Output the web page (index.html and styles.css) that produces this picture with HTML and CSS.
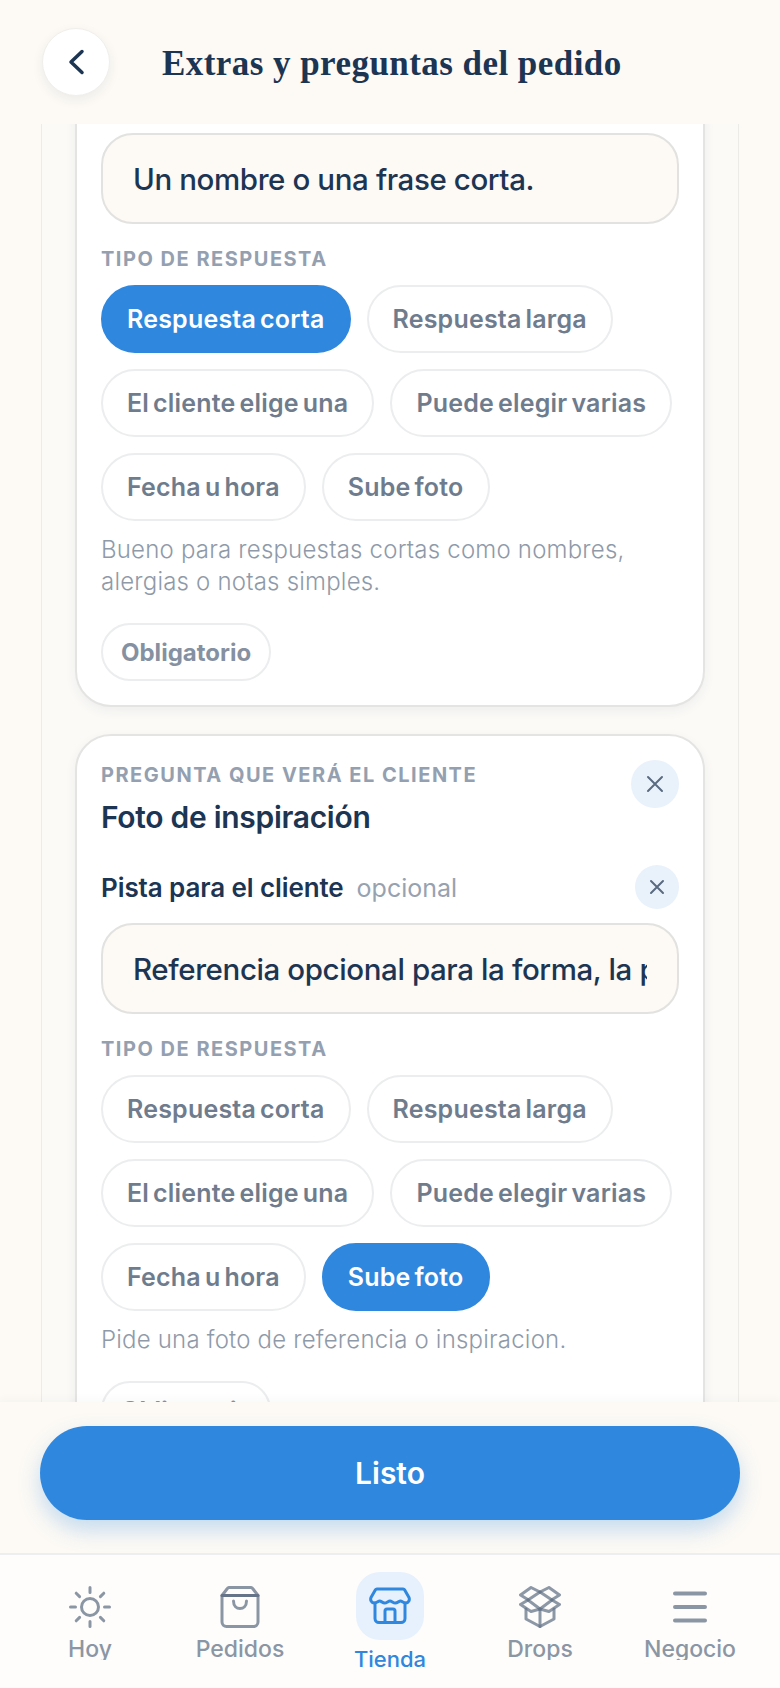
FILE: index.html
```html
<!DOCTYPE html>
<html lang="es">
<head>
  <title>Extras y preguntas del pedido</title>
  <meta name="viewport" content="width=device-width, initial-scale=1" />
  <link rel="stylesheet" href="styles.css">
</head>
<body>
  <header class="topbar">
    <button class="back" type="button" aria-label="Volver">
      <svg width="18" height="26" viewBox="0 0 18 26"><path d="M15 2.5 4 13l11 10.5" /></svg>
    </button>
    <h1>Extras y preguntas del pedido</h1>
  </header>

  <main class="scroller">
    <section class="group">
      <article class="card card-first">
        <input class="field" value="Un nombre o una frase corta.">
        <div class="eyebrow type-label">TIPO DE RESPUESTA</div>
        <div class="chips">
          <span class="chip selected">Respuesta corta</span>
          <span class="chip">Respuesta larga</span>
          <span class="chip">El cliente elige una</span>
          <span class="chip">Puede elegir varias</span>
          <span class="chip">Fecha u hora</span>
          <span class="chip">Sube foto</span>
        </div>
        <p class="help">Bueno para respuestas cortas como nombres, alergias o notas simples.</p>
        <span class="chip chip-small">Obligatorio</span>
      </article>

      <article class="card">
        <div class="card-head">
          <div>
            <div class="eyebrow">PREGUNTA QUE VERÁ EL CLIENTE</div>
            <div class="question">Foto de inspiración</div>
          </div>
          <button class="close" type="button" aria-label="Quitar pregunta">
            <svg width="18" height="18" viewBox="0 0 18 18"><path d="m2 2 14 14M16 2 2 16" /></svg>
          </button>
        </div>
        <div class="hint-row">
          <div class="hint"><strong>Pista para el cliente</strong><span>opcional</span></div>
          <button class="close close-small" type="button" aria-label="Quitar pista">
            <svg width="16" height="16" viewBox="0 0 16 16"><path d="m2 2 12 12M14 2 2 14" /></svg>
          </button>
        </div>
        <input class="field" value="Referencia opcional para la forma, la paleta o el estilo.">
        <div class="eyebrow type-label">TIPO DE RESPUESTA</div>
        <div class="chips">
          <span class="chip">Respuesta corta</span>
          <span class="chip">Respuesta larga</span>
          <span class="chip">El cliente elige una</span>
          <span class="chip">Puede elegir varias</span>
          <span class="chip">Fecha u hora</span>
          <span class="chip selected">Sube foto</span>
        </div>
        <p class="help">Pide una foto de referencia o inspiracion.</p>
        <span class="chip chip-small">Obligatorio</span>
      </article>
    </section>
  </main>

  <div class="footer">
    <button class="done" type="button">Listo</button>
  </div>

  <nav class="tabs">
    <a class="tab">
      <svg class="icon" width="42" height="42" viewBox="0 0 42 42">
        <circle cx="21" cy="21" r="8.5" />
        <path d="M21 1.5v5M21 35.500v5M1.500 21h5M35.500 21h5M7.200 7.200l3.400 3.400M31.400 31.400l3.400 3.400M7.200 34.800l3.400-3.400M31.400 10.600l3.400-3.400" />
      </svg>
      <span>Hoy</span>
    </a>
    <a class="tab">
      <svg class="icon" width="42" height="42" viewBox="0 0 42 42">
        <path d="M3 9.500 8 3a3 3 0 0 1 2-1.500h22A3 3 0 0 1 34 3l5 6.500V36a4.500 4.500 0 0 1-4.500 4.500h-27A4.500 4.500 0 0 1 3 36Z" />
        <path class="dark" d="M3 9.500h36" />
        <path d="M14.500 15c0 10 13 10 13 0" />
      </svg>
      <span>Pedidos</span>
    </a>
    <a class="tab active">
      <div class="tile">
        <svg class="icon" width="42" height="38" viewBox="0 0 42 38">
          <path d="M8 2h26a2 2 0 0 1 1.700.900L40 10.500c1 2.500-.500 5.500-3.500 5.500-2.500 0-3.500-2-5-2s-3 2-5.200 2-3.500-2-5.300-2-3.200 2-5.300 2-3.500-2-5-2-2.700 2-5.200 2c-3 0-4.500-3-3.500-5.500L6.300 2.900A2 2 0 0 1 8 2Z" />
          <path d="M6 16v15.500a4 4 0 0 0 4 4h22a4 4 0 0 0 4-4V16" />
          <path d="M16 35.500V24a2 2 0 0 1 2-2h6a2 2 0 0 1 2 2v11.500" />
        </svg>
      </div>
      <span>Tienda</span>
    </a>
    <a class="tab">
      <svg class="icon box" width="42" height="42" viewBox="0 0 42 42">
        <path d="M21 6 12 1.500 1.500 9l8 5" />
        <path d="M21 6l9-4.500L40.500 9l-8 5" />
        <path d="M21 6l12 8-12 9-12-9Z" />
        <path d="M9 14l-7.500 4.500L12 25.500l9-2.500" />
        <path d="M33 14l7.500 4.500L30 25.500 21 23" />
        <path d="M7 23v10l14 7.500L35 33V23" />
        <path d="M21 23v17.500" />
      </svg>
      <span>Drops</span>
    </a>
    <a class="tab">
      <svg class="icon" width="42" height="42" viewBox="0 0 42 42">
        <path class="thick" d="M6 7.500h30M6 21h30M6 34.500h30" />
      </svg>
      <span>Negocio</span>
    </a>
  </nav>
</body>
</html>
```

FILE: styles.css
```css
* { box-sizing: border-box; }
html, body { margin: 0; height: 100%; }
body {
  width: 780px;
  height: 1688px;
  display: flex;
  flex-direction: column;
  overflow: hidden;
  background: #fdfaf5;
  color: #1c3553;
  font-family: Inter, "Noto Sans", sans-serif;
}
button { font-family: inherit; border: none; padding: 0; }

/* top bar */
.topbar { height: 124px; flex: none; display: flex; align-items: flex-start; padding: 28px 0 0 42px; }
.back {
  width: 68px;
  height: 68px;
  border-radius: 50%;
  background: #fff;
  border: 1px solid #f1efeb;
  box-shadow: 0 4px 12px rgba(28, 53, 83, .07);
  display: flex;
  align-items: center;
  justify-content: center;
}
.back path { fill: none; stroke: #1c3553; stroke-width: 3.500; stroke-linecap: round; stroke-linejoin: round; }
.topbar h1 {
  margin: 0 0 0 52px;
  font-family: "Liberation Serif", serif;
  font-size: 35px;
  line-height: 72px;
  font-weight: 700;
  letter-spacing: .45px;
  white-space: nowrap;
}

/* scrolled content, the top of the first card is above the fold */
.scroller { flex: 1; min-height: 0; overflow: hidden; }
.group {
  margin: -60px 41px 0;
  padding: 0 33px;
  background: #fbfaf7;
  border: 1px solid #ecebe7;
  border-radius: 36px;
}
.card {
  background: #fff;
  border: 2px solid #e4e4e3;
  border-radius: 36px;
  padding: 24px;
  margin-bottom: 27px;
  box-shadow: 0 4px 12px rgba(28, 53, 83, .06);
}
.card-first { padding-top: 66px; }
.eyebrow { font-size: 20px; line-height: 30px; font-weight: 700; letter-spacing: 1.500px; color: #94a0b0; }
.card-head { display: flex; justify-content: space-between; align-items: flex-start; }
.question { margin-top: 7px; font-size: 30px; line-height: 40px; font-weight: 600; letter-spacing: -.3px; }
.close {
  flex: none;
  width: 48px;
  height: 48px;
  border-radius: 50%;
  background: #e9f1fb;
  display: flex;
  align-items: center;
  justify-content: center;
}
.close path { fill: none; stroke: #5a6b80; stroke-width: 2; stroke-linecap: round; }
.close-small { width: 44px; height: 44px; }
.hint-row { margin-top: 28px; display: flex; justify-content: space-between; align-items: center; }
.hint { display: flex; align-items: baseline; gap: 13px; }
.hint strong { font-size: 26px; font-weight: 600; letter-spacing: -.1px; }
.hint span { font-size: 25px; color: #97a2b1; }
.field {
  display: block;
  width: 100%;
  height: 91px;
  padding: 0 30px;
  margin-top: 14px;
  background: #fdf9f4;
  border: 2px solid #e2e2e0;
  border-radius: 32px;
  font-family: inherit;
  font-size: 29.500px;
  font-weight: 500;
  letter-spacing: -.4px;
  color: #1c3553;
  outline: none;
}
.card-first .field { margin-top: 0; }
.type-label { margin-top: 20px; }
.chips { margin-top: 11px; display: flex; flex-wrap: wrap; gap: 16px; }
.chip {
  display: inline-flex;
  align-items: center;
  height: 68px;
  padding: 0 24px;
  background: #fff;
  border: 2px solid #ecedee;
  border-radius: 34px;
  font-size: 25px;
  font-weight: 600;
  letter-spacing: .2px;
  word-spacing: -2.500px;
  color: #6f7c8d;
  white-space: nowrap;
}
.chip.selected { background: #2f87de; border-color: #2f87de; color: #fff; }
.help { margin: 13px 0 25px; font-size: 24px; line-height: 32px; font-weight: 300; letter-spacing: .2px; color: #8f9aa9; }
.chip-small { height: 58px; padding: 0 18px; font-size: 24px; font-weight: 700; letter-spacing: 0; border-radius: 29px; color: #8591a1; }

/* footer */
.footer {
  flex: none;
  height: 151px;
  padding: 24px 40px 0;
  background: #fdfaf5;
  box-shadow: 0 -3px 8px rgba(28, 53, 83, .03);
  position: relative;
}
.done {
  display: block;
  width: 100%;
  height: 94px;
  border-radius: 47px;
  background: #2f87de;
  color: #fff;
  font-size: 30px;
  font-weight: 600;
  box-shadow: 0 10px 22px rgba(47, 135, 222, .28);
}

/* bottom tabs */
.tabs {
  flex: none;
  height: 135px;
  padding: 0 15px;
  display: grid;
  grid-template-columns: repeat(5, 1fr);
  background: #fefdfb;
  border-top: 2px solid #eceef0;
  position: relative;
}
.tab { display: flex; flex-direction: column; align-items: center; padding-top: 31px; color: #8b96a5; }
.tab span { display: block; height: 22px; margin-top: 10px; overflow: hidden; font-size: 23px; line-height: 23px; font-weight: 500; }
.icon { display: block; fill: none; stroke: #8b96a5; stroke-width: 3; stroke-linecap: round; stroke-linejoin: round; }
.icon .dark { stroke: #66748a; }
.icon .thick { stroke-width: 4; }
.box { stroke: #67758a; stroke-opacity: .75; }
.tab.active { padding-top: 17px; color: #2f87de; }
.tab.active span { margin-top: 8px; font-size: 22px; }
.tile { width: 68px; height: 68px; border-radius: 24px; background: #e6f1fd; display: flex; align-items: center; justify-content: center; }
.tile .icon { stroke: #2f87de; }
```
